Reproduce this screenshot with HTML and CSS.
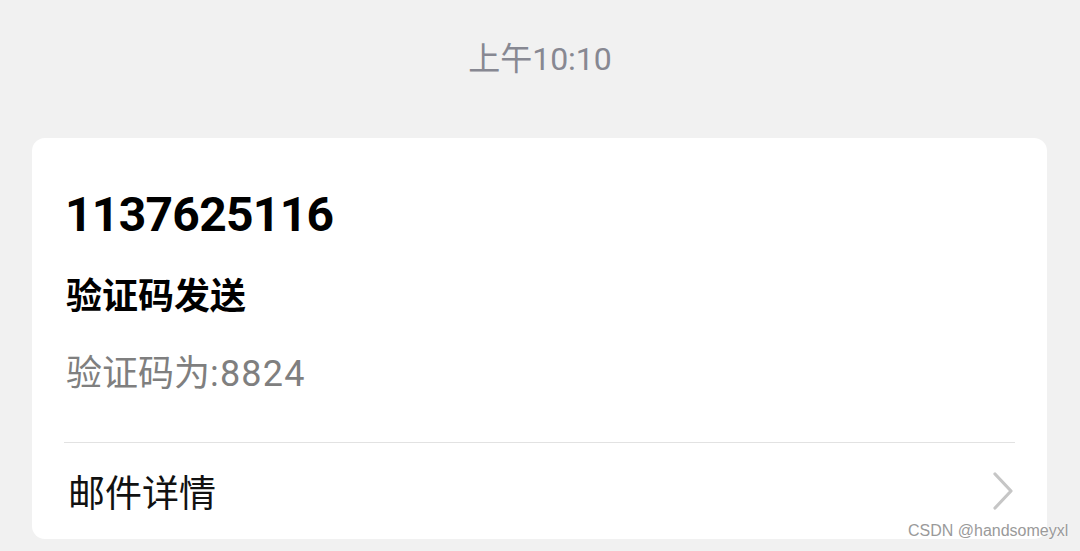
FILE: index.html
```html
<!DOCTYPE html>
<html lang="zh">
<head>
<meta charset="utf-8">
<link rel="stylesheet" href="styles.css">
</head>
<body>
<div class="time">上午10:10</div>
<div class="card">
  <div class="sender">1137625116</div>
  <div class="subject">验证码发送</div>
  <div class="body-text">验证码为<span class="code">:8824</span></div>
  <div class="divider"></div>
  <div class="detail-row">
    <span class="detail-label">邮件详情</span>
    <svg class="chevron" width="24" height="40" viewBox="0 0 24 40"><path d="M4 3 L20 20 L4 37" fill="none" stroke="#c6c6c6" stroke-width="3.2" stroke-linecap="round" stroke-linejoin="round"/></svg>
  </div>
</div>
<div class="watermark">CSDN @handsomeyxl</div>
</body>
</html>
```
FILE: styles.css
```css
html, body {
  margin: 0;
  padding: 0;
}
body {
  background: #f1f1f1;
  width: 1080px;
  height: 551px;
  overflow: hidden;
  position: relative;
  font-family: "Roboto", "Noto Sans CJK SC", sans-serif;
}
.time {
  padding-top: 38px;
  height: 42px;
  line-height: 42px;
  text-align: center;
  font-size: 32px;
  color: #878892;
  font-family: "Roboto", "Noto Sans CJK SC", sans-serif;
}
.card {
  margin: 58px 0 0 32px;
  width: 1015px;
  height: 401px;
  box-sizing: border-box;
  background: #ffffff;
  border-radius: 13px;
  padding: 47px 32px 0 32px;
}
.sender {
  font-size: 48px;
  line-height: 60px;
  font-weight: 700;
  color: #000;
  letter-spacing: -0.7px;
  padding-left: 1px;
}
.subject {
  margin-top: 28px;
  font-size: 36px;
  line-height: 40px;
  font-weight: 700;
  color: #000;
  font-family: "Noto Sans CJK SC", sans-serif;
  padding-left: 2px;
}
.body-text {
  margin-top: 41px;
  font-size: 36px;
  line-height: 40px;
  color: #7f7f7f;
  font-family: "Roboto", "Noto Sans CJK SC", sans-serif;
  padding-left: 2px;
}
.code {
  letter-spacing: 1.2px;
}
.divider {
  margin-top: 48px;
  height: 1px;
  background: #e2e2e2;
}
.detail-row {
  height: 96px;
  display: flex;
  align-items: center;
  justify-content: space-between;
}
.detail-label {
  font-size: 37px;
  color: #111;
  font-family: "Noto Sans CJK SC", sans-serif;
  padding-left: 4px;
}
.chevron {
  display: block;
  margin-right: 0;
}
.watermark {
  position: absolute;
  left: 908px;
  top: 522px;
  font-family: "Liberation Sans", sans-serif;
  font-size: 16px;
  color: #9a9a9a;
  text-shadow: 0 0 2px #fff;
}
```
